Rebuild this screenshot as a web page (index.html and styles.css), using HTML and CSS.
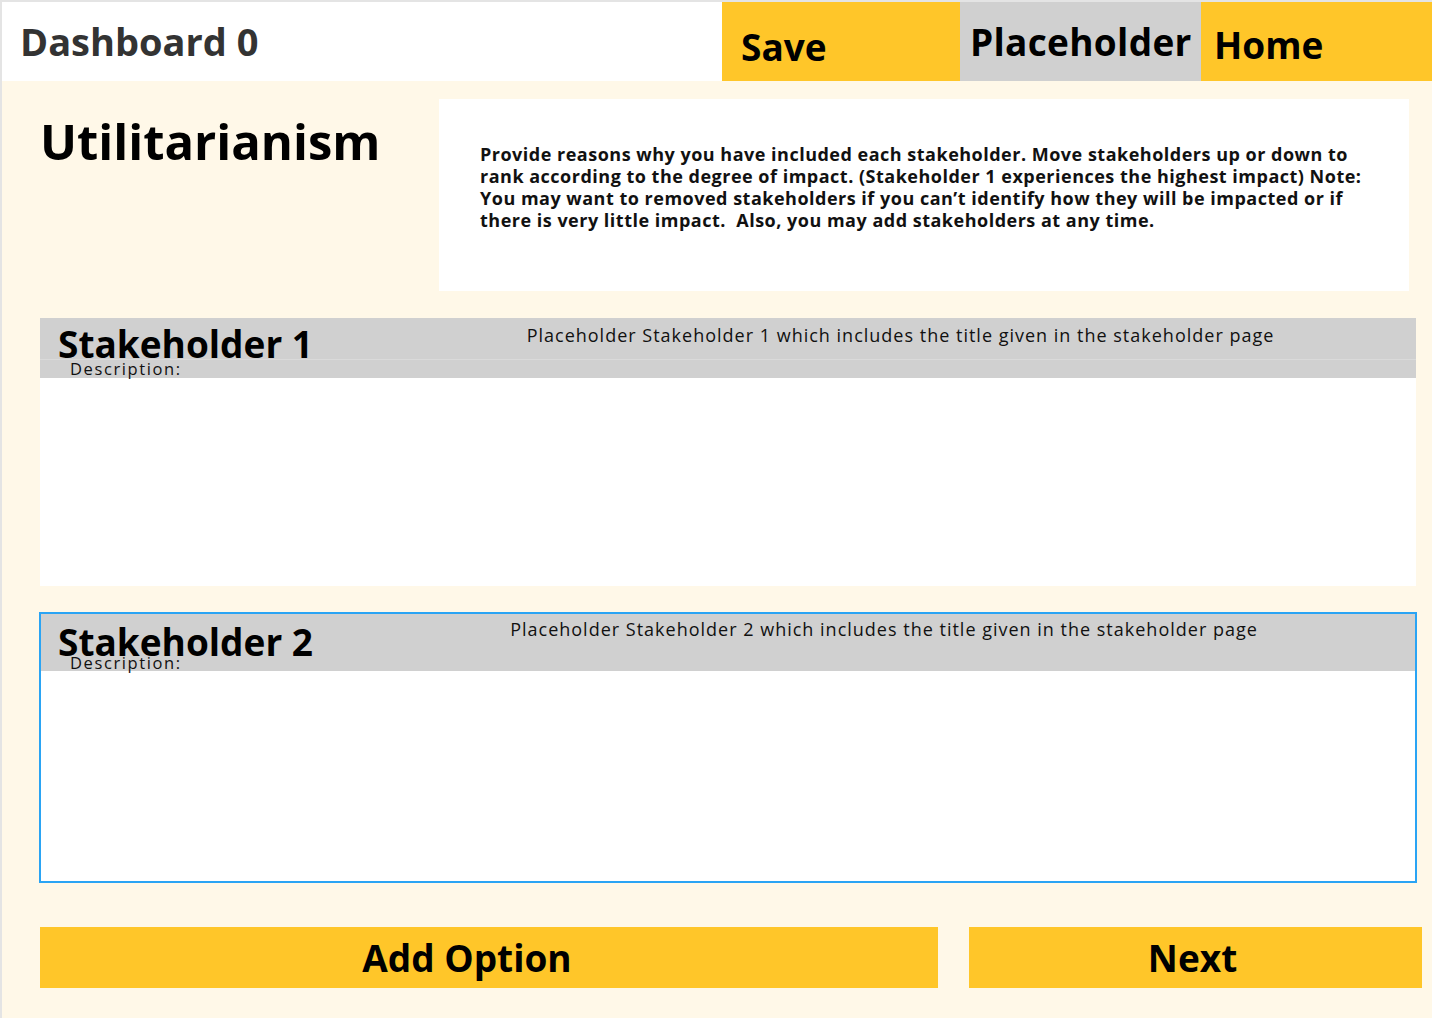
FILE: index.html
```html
<!DOCTYPE html>
<html lang="en">
<head>
<meta charset="utf-8">
<title>Utilitarianism</title>
<link rel="stylesheet" href="styles.css">
</head>
<body>
<div class="frame">
  <header class="topbar">
    <div class="brand">Dashboard 0</div>
    <a class="nav nav-save">Save</a>
    <a class="nav nav-placeholder">Placeholder</a>
    <a class="nav nav-home">Home</a>
  </header>
  <main class="main">
    <section class="intro">
      <h1 class="page-title">Utilitarianism</h1>
      <div class="instructions">
        <p>Provide reasons why you have included each stakeholder. Move stakeholders up or down to<br>rank according to the degree of impact. (Stakeholder 1 experiences the highest impact) Note:<br>You may want to removed stakeholders if you can’t identify how they will be impacted or if<br>there is very little impact.&nbsp; Also, you may add stakeholders at any time.</p>
      </div>
    </section>

    <section class="card">
      <div class="card-head">
        <div class="card-top">
          <h2 class="card-title">Stakeholder 1</h2>
          <p class="card-summary">Placeholder Stakeholder 1 which includes the title given in the stakeholder page</p>
        </div>
        <div class="card-desc">Description:</div>
      </div>
      <div class="card-body"></div>
    </section>

    <section class="card card--active">
      <div class="card-head">
        <div class="card-top">
          <h2 class="card-title">Stakeholder 2</h2>
          <p class="card-summary">Placeholder Stakeholder 2 which includes the title given in the stakeholder page</p>
        </div>
        <div class="card-desc">Description:</div>
      </div>
      <div class="card-body"></div>
    </section>

    <div class="actions">
      <button class="btn btn-add">Add Option</button>
      <button class="btn btn-next">Next</button>
    </div>
  </main>
</div>
</body>
</html>
```
FILE: styles.css
```css
html, body {
  margin: 0;
  padding: 0;
}

body {
  font-family: "Open Sans", "Noto Sans", sans-serif;
  color: #000;
  background: #fff8e8;
}

.frame {
  box-sizing: border-box;
  height: 1018px;
  overflow: hidden;
  border-top: 2px solid #e4e4e4;
  border-left: 2px solid #e4e4e4;
  background: #fff8e8;
}

/* ---------- top bar ---------- */
.topbar {
  display: flex;
  height: 79px;
  background: #fff;
}

.brand {
  flex: 1;
  padding: 20px 0 0 18px;
  font-size: 38px;
  font-weight: 700;
  line-height: 1;
  color: #333;
}

.nav {
  box-sizing: border-box;
  font-size: 37px;
  font-weight: 700;
  line-height: 1;
  color: #000;
  cursor: pointer;
}

.nav-save {
  width: 238px;
  padding: 26px 0 0 19px;
  background: #ffc629;
}

.nav-placeholder {
  width: 241px;
  padding: 21px 0 0 10px;
  background: #d0d0d0;
  letter-spacing: 0.3px;
}

.nav-home {
  width: 231px;
  padding: 24px 0 0 13px;
  background: #ffc629;
}

/* ---------- main ---------- */
.main {
  padding: 18px 0 0 38px;
}

.intro {
  display: flex;
  height: 192px;
}

.page-title {
  width: 399px;
  margin: 18px 0 0;
  font-size: 49px;
  font-weight: 700;
  line-height: 1;
}

.instructions {
  box-sizing: border-box;
  width: 970px;
  padding: 44px 10px 0 41px;
  background: #fff;
}

.instructions p {
  margin: 0;
  font-size: 18px;
  font-weight: 700;
  letter-spacing: 0.5px;
  line-height: 22px;
  color: #111;
  white-space: nowrap;
}

/* ---------- stakeholder cards ---------- */
.card {
  box-sizing: border-box;
  width: 1376px;
  margin-top: 27px;
  background: #fff;
}

.card-head {
  background: #d0d0d0;
}

.card-top {
  box-sizing: border-box;
  display: flex;
  height: 42px;
  border-bottom: 1px solid #dadada;
}

.card-title {
  margin: 0;
  padding: 7px 0 0 18px;
  font-size: 37px;
  font-weight: 700;
  line-height: 1;
  white-space: nowrap;
}

.card-summary {
  flex: 1;
  margin: 0;
  padding: 8px 0 0 72px;
  text-align: center;
  font-size: 18px;
  font-weight: 500;
  letter-spacing: 1px;
  line-height: 1;
  color: #111;
  white-space: nowrap;
}

.card-desc {
  height: 18px;
  padding-left: 30px;
  font-size: 16.5px;
  font-weight: 500;
  letter-spacing: 1.6px;
  line-height: 18px;
  color: #111;
}

.card-body {
  height: 208px;
}

.card--active {
  width: 1378px;
  margin: 26px 0 0 -1px;
  border: 2px solid #2aa4f4;
}

.card--active .card-top {
  height: 40px;
  border-bottom: 0;
}

.card--active .card-title {
  padding-top: 9px;
  padding-left: 17px;
}

.card--active .card-summary {
  padding-top: 6px;
  padding-left: 40px;
}

.card--active .card-desc {
  height: 17px;
  padding-left: 29px;
}

.card--active .card-body {
  height: 210px;
}

/* ---------- actions ---------- */
.actions {
  display: flex;
  gap: 31px;
  margin-top: 44px;
}

.btn {
  height: 61px;
  border: 0;
  padding: 0;
  background: #ffc629;
  font-family: "Open Sans", "Noto Sans", sans-serif;
  font-size: 37px;
  font-weight: 700;
  line-height: 61px;
  color: #000;
  cursor: pointer;
}

.btn-add {
  width: 898px;
  padding-right: 44px;
}

.btn-next {
  width: 453px;
  padding-right: 6px;
}
```
